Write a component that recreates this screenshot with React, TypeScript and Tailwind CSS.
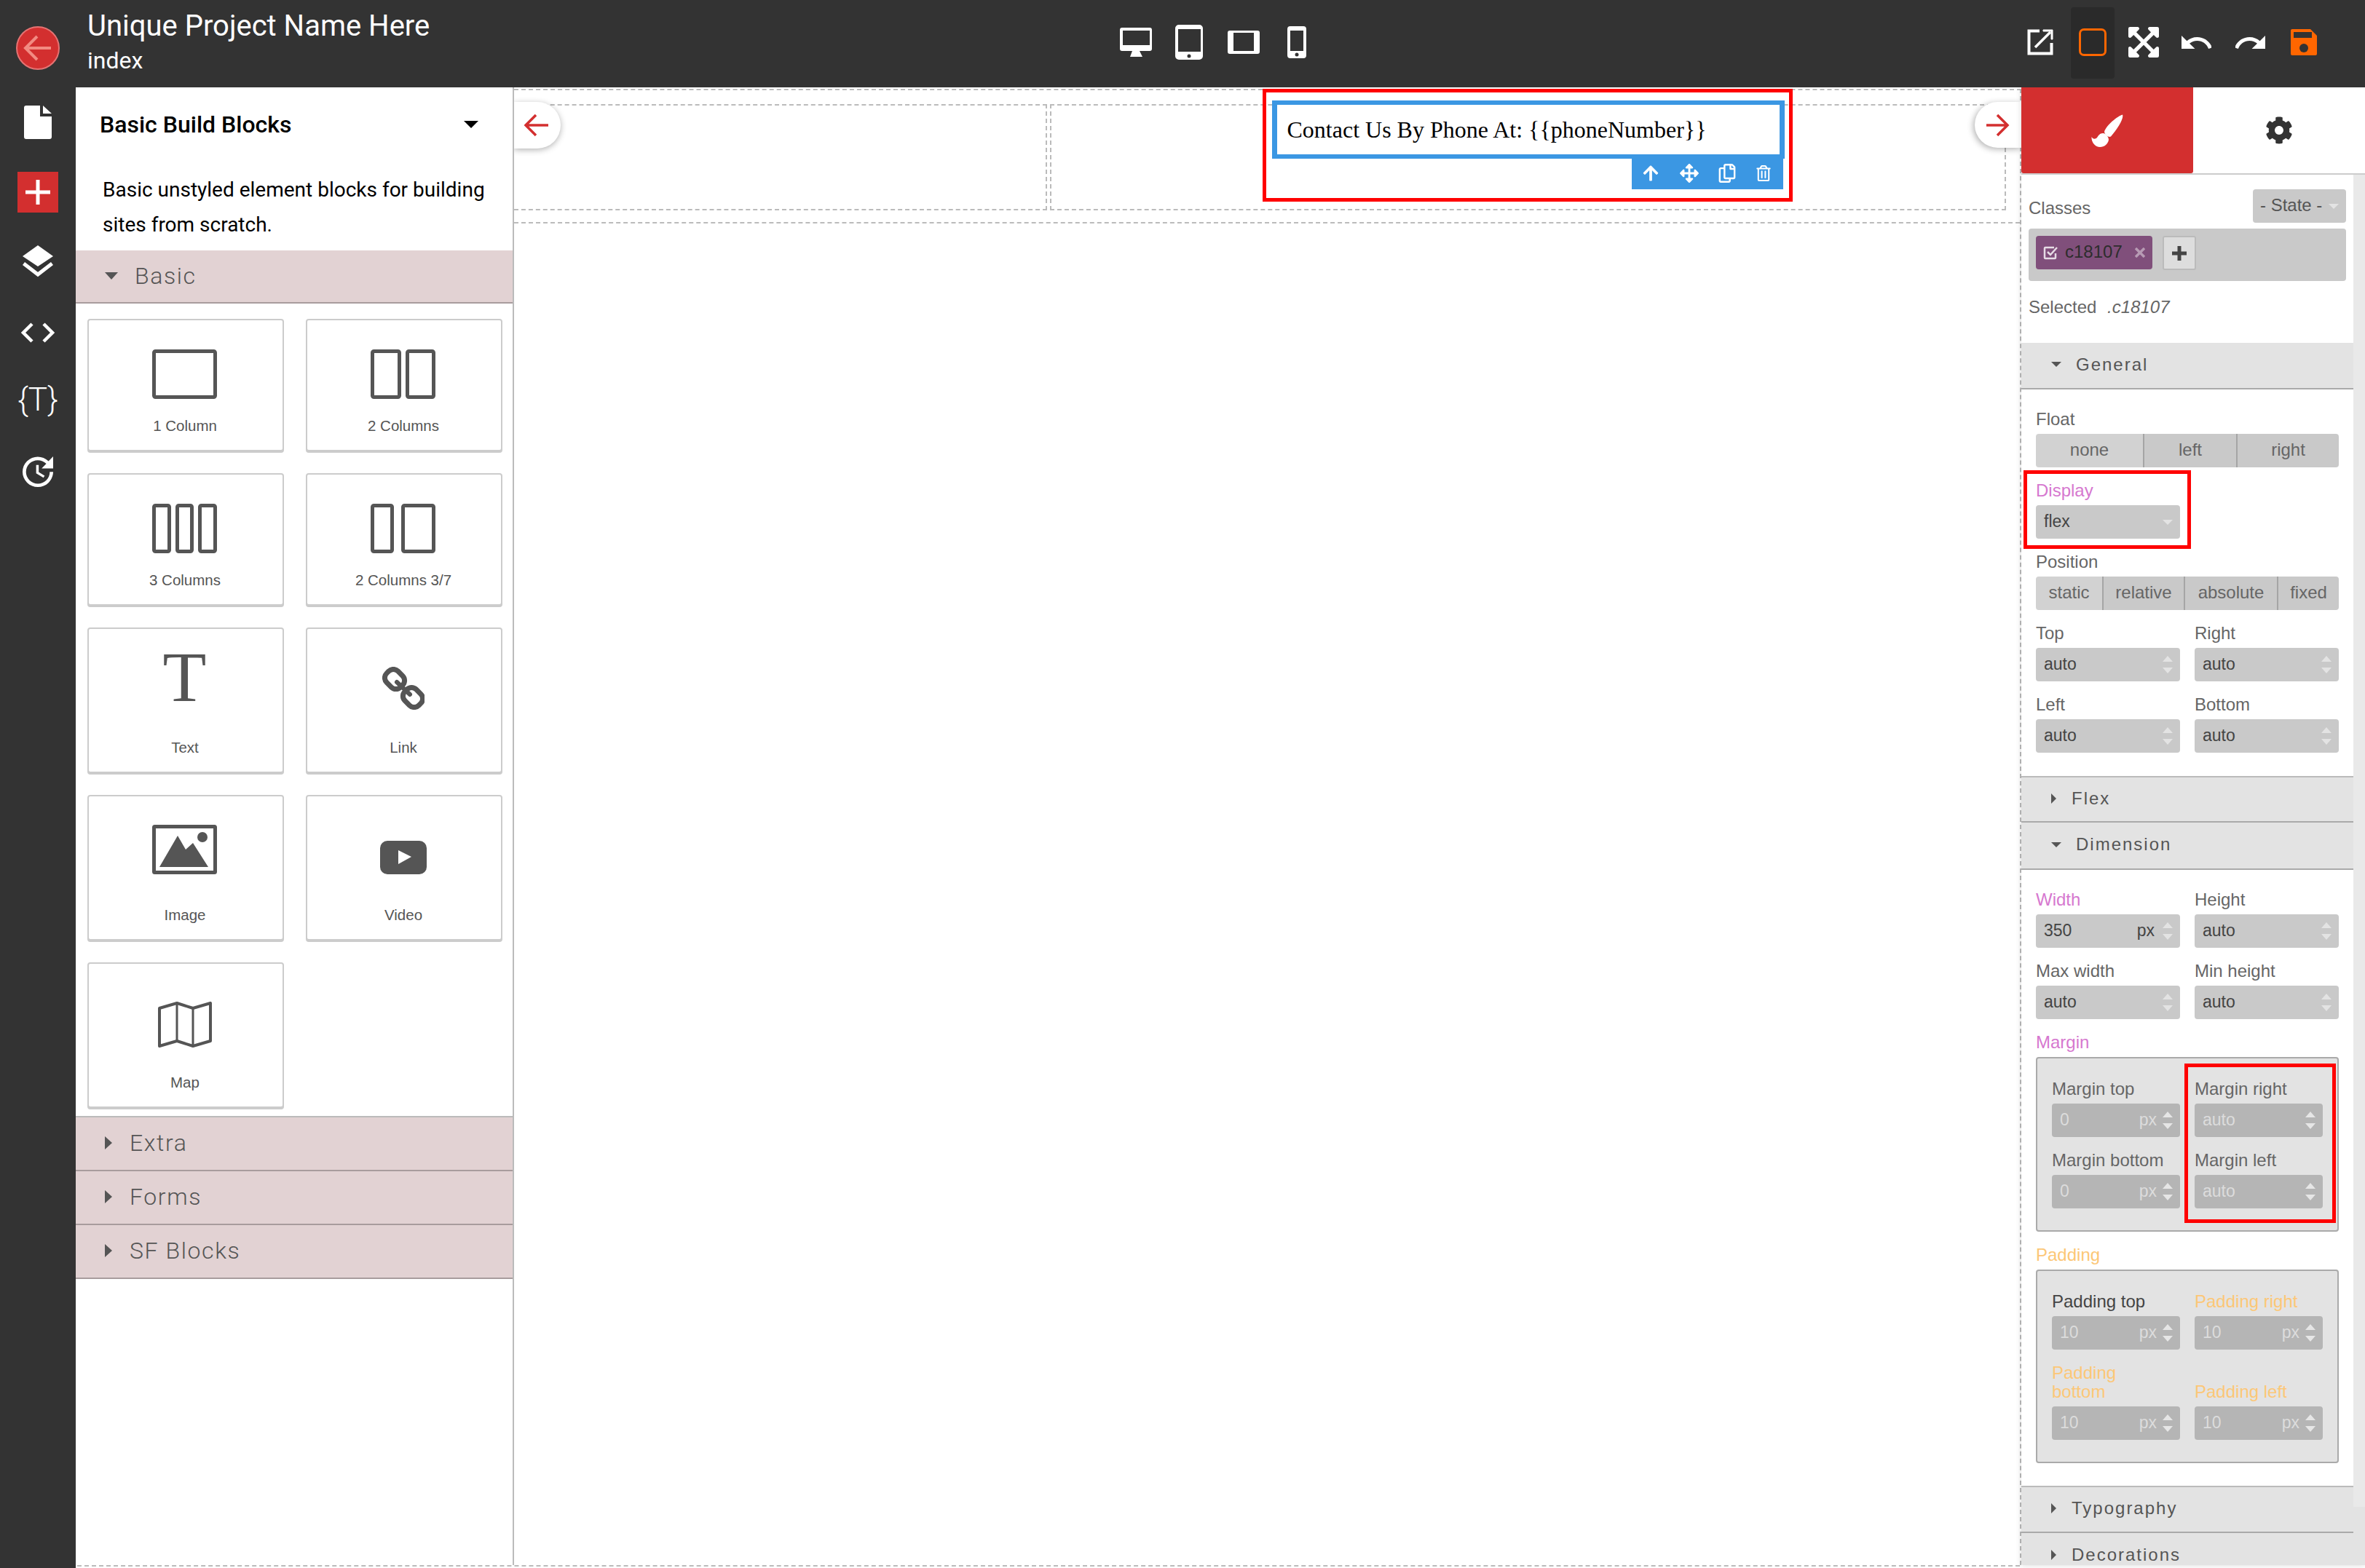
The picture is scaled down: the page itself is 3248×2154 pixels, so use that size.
import React from 'react';
import { FaCog, FaArrowUp, FaArrowsAlt, FaRegCopy, FaRegTrashAlt } from 'react-icons/fa';
import { MdUpdate } from 'react-icons/md';

const TriDown = ({ c = 'border-t-[#555]' }: { c?: string }) => (
  <span className={`block w-0 h-0 border-x-[7px] border-x-transparent border-t-[7px] ${c}`} />
);
const TriRight = ({ c = 'border-l-[#555]' }: { c?: string }) => (
  <span className={`block w-0 h-0 border-y-[7px] border-y-transparent border-l-[7px] ${c}`} />
);

const Stepper = ({ dark }: { dark?: boolean }) => (
  <span className="flex flex-col gap-[8px] items-center">
    <span className={`block w-0 h-0 border-x-[7px] border-x-transparent border-b-[8px] ${dark ? 'border-b-[#e6e6e6]' : 'border-b-[#e3e3e3]'}`} />
    <span className={`block w-0 h-0 border-x-[7px] border-x-transparent border-t-[8px] ${dark ? 'border-t-[#e6e6e6]' : 'border-t-[#e3e3e3]'}`} />
  </span>
);

const Label = ({ children, color = 'text-[#666]' }: { children: React.ReactNode; color?: string }) => (
  <div className={`text-[24px] leading-[26px] mb-[7px] ${color}`}>{children}</div>
);

const Input = ({ value, unit, off, select }: { value: string; unit?: string; off?: boolean; select?: boolean }) => (
  <div className={`h-[46px] rounded-[4px] flex items-center pr-[10px] text-[23px] ${off ? 'bg-[#b5b5b5] text-[#dcdcdc] pl-[11px]' : 'bg-[#c9c9c9] text-[#444] pl-[11px]'}`}>
    <span className="flex-1 pb-[2px]">{value}</span>
    {unit && <span className={`pb-[2px] ${off ? 'mr-[8px]' : 'mr-[11px]'}`}>{unit}</span>}
    {select ? <TriDown c="border-t-[#e3e3e3]" /> : <Stepper dark={off} />}
  </div>
);

const Field = ({ label, value, unit, off, labelColor }: { label: React.ReactNode; value: string; unit?: string; off?: boolean; labelColor?: string }) => (
  <div className="flex flex-col justify-end">
    <Label color={labelColor}>{label}</Label>
    <Input value={value} unit={unit} off={off} />
  </div>
);

const Segments = ({ items }: { items: { t: string; w: string }[] }) => (
  <div className="flex h-[46px] rounded-[4px] overflow-hidden text-[24px] text-[#666]">
    {items.map((it, i) => (
      <div key={it.t} className={`${it.w} flex items-center justify-center pb-[3px] ${i === 0 ? 'bg-[#d2d2d2]' : 'bg-[#c9c9c9] border-l-2 border-l-[#a5a5a5]'}`}>
        {it.t}
      </div>
    ))}
  </div>
);

const SectionHeader = ({ title, open, top, h = 'h-[64px]' }: { title: string; open?: boolean; top?: boolean; h?: string }) => (
  <div className={`${h} shrink-0 bg-[#e3e3e3] border-b-2 border-b-[#aaa] flex items-center pl-[41px] pb-[3px] text-[24px] tracking-[2px] text-[#555] ${top ? 'border-t-2 border-t-[#bbb]' : ''}`}>
    {open ? <TriDown /> : <TriRight />}
    <span className={open ? 'ml-[20px]' : 'ml-[21px]'}>{title}</span>
  </div>
);

const RoseHeader = ({ title, open }: { title: string; open?: boolean }) => (
  <div className={`bg-[#e2d2d3] border-b-2 border-b-[#a89c9d] flex items-center pl-[40px] text-[32px] font-light tracking-[1.6px] text-[#555] ${open ? 'h-[73px] pb-[2px]' : 'h-[74px] pb-[3px]'}`}>
    {open ? <span className="block w-0 h-0 border-x-[9px] border-x-transparent border-t-[10px] border-t-[#555]" /> : <span className="block w-0 h-0 border-y-[9px] border-y-transparent border-l-[10px] border-l-[#555]" />}
    <span className={open ? 'ml-[23px]' : 'ml-[24px]'}>{title}</span>
  </div>
);

const Card = ({ label, tall, top, children }: { label: string; tall?: boolean; top: string; children: React.ReactNode }) => (
  <div className={`w-[270px] ${tall ? 'h-[200px]' : 'h-[182px]'} rounded-[4px] border-2 border-[#ccc] shadow-[0_2px_0_#ccc] flex flex-col items-center bg-white`}>
    <div className={`${tall ? 'h-[150px]' : 'h-[132px]'} pr-[3px] ${top}`}>{children}</div>
    <div className="text-[20.5px] leading-[26px] text-[#555] pr-[2px]">{label}</div>
  </div>
);

const Box = ({ x, w }: { x: number; w: number }) => (
  <rect x={x + 2.5} y={2.5} width={w - 5} height={63} rx={2} fill="none" stroke="#555" strokeWidth={5} />
);

const ColumnIcon = ({ cols }: { cols: [number, number][] }) => (
  <svg width={89} height={68} viewBox="0 0 89 68">
    {cols.map(([x, w]) => <Box key={x} x={x} w={w} />)}
  </svg>
);

const LinkIcon = () => (
  <svg width={58} height={59} viewBox="0 0 58 59" fill="none" stroke="#555">
    <rect x={3.5} y={6} width={27} height={22} rx={9} strokeWidth={7} transform="rotate(45 17 17)" />
    <rect x={28.5} y={31} width={27} height={22} rx={9} strokeWidth={7} transform="rotate(45 42 42)" />
    <path d="M20 21 L38 38" strokeWidth={6} strokeLinecap="round" />
  </svg>
);

const ImageIcon = () => (
  <svg width={89} height={68} viewBox="0 0 89 68">
    <rect x={2.5} y={2.5} width={84} height={63} fill="none" stroke="#555" strokeWidth={5} rx={1} />
    <path d="M10 58 L35 15 L46 34 L56 25 L77 58 Z" fill="#555" />
    <ellipse cx={69} cy={17} rx={7} ry={7} fill="#555" />
  </svg>
);

const VideoIcon = () => (
  <svg width={64} height={46} viewBox="0 0 64 46">
    <rect width={64} height={46} rx={10} fill="#555" />
    <path d="M25 13 L43 22 L25 32 Z" fill="#fff" />
  </svg>
);

const MapIcon = () => (
  <svg width={74} height={63} viewBox="0 0 74 63">
    <path d="M2 9 L26 2 L48 9 L72 2 V54 L48 61 L26 54 L2 61 Z" fill="none" stroke="#555" strokeWidth={4} strokeLinejoin="round" />
    <path d="M26 2 V54 M48 9 V61" stroke="#555" strokeWidth={3} />
  </svg>
);

const Rail = () => (
  <div className="w-[104px] shrink-0 bg-[#333] flex flex-col items-center text-white">
    <div className="mt-[36px] w-[60px] h-[60px] rounded-full bg-[#d32f2f] border-2 border-[#e57373] flex items-center justify-center">
      <svg width={40} height={36} viewBox="0 0 40 36" fill="none" stroke="#f28b82" strokeWidth={4}>
        <path d="M38 18 H3 M19 2 L3 18 L19 34" />
      </svg>
    </div>
    <svg className="mt-[49px]" width={38} height={46} viewBox="0 0 38 46">
      <path d="M3 0 H22 V15 H38 V43 a3 3 0 0 1 -3 3 H3 a3 3 0 0 1 -3 -3 V3 a3 3 0 0 1 3 -3 Z M26 0 L38 11 H26 Z" fill="#fff" />
    </svg>
    <div className="mt-[45px] w-[56px] h-[56px] bg-[#d32f2f] flex items-center justify-center">
      <svg width={34} height={34} viewBox="0 0 34 34"><path d="M14.5 0 h5 v14.5 H34 v5 H19.5 V34 h-5 V19.5 H0 v-5 H14.5 Z" fill="#fff" /></svg>
    </div>
    <svg className="mt-[45px]" width={42} height={44} viewBox="0 0 42 44">
      <path d="M21 0 L42 15 L21 29 L0 15 Z" fill="#fff" />
      <path d="M1.5 25 L21 40 L40.5 25" fill="none" stroke="#fff" strokeWidth={5} />
    </svg>
    <svg className="mt-[62px]" width={46} height={28} viewBox="0 0 46 28" fill="none" stroke="#fff" strokeWidth={4.5}>
      <path d="M15 2 L3 14 L15 26 M31 2 L43 14 L31 26" />
    </svg>
    <div className="mt-[55px] h-[46px] leading-[46px] text-[44px] font-['Roboto',sans-serif] font-light">{'{T}'}</div>
    <MdUpdate className="mt-[48px]" style={{ width: 56, height: 56 }} />
  </div>
);

const Title = () => (
  <div className="w-[1418px] shrink-0 font-['Roboto',sans-serif] text-white">
    <div className="text-[40px] leading-[46px] mt-[1px]">Unique Project Name Here</div>
    <div className="text-[32px] leading-[38px] mt-[5px]">index</div>
  </div>
);

const Devices = () => (
  <div className="flex items-center">
    <svg width={44} height={40} viewBox="0 0 44 40">
      <path fillRule="evenodd" d="M3 0 H41 a3 3 0 0 1 3 3 V29 a3 3 0 0 1 -3 3 H3 a3 3 0 0 1 -3 -3 V3 a3 3 0 0 1 3 -3 Z M4 4 V24 H41 V4 Z" fill="#fff" />
      <path d="M17 32 H27 L31 40 H14 Z" fill="#fff" />
    </svg>
    <svg className="ml-[32px]" width={38} height={48} viewBox="0 0 38 48">
      <path fillRule="evenodd" d="M5 0 H33 a5 5 0 0 1 5 5 V43 a5 5 0 0 1 -5 5 H5 a5 5 0 0 1 -5 -5 V5 a5 5 0 0 1 5 -5 Z M4 6 V37 H35 V6 Z" fill="#fff" />
      <circle cx={19} cy={43} r={2.5} fill="#333" />
    </svg>
    <svg className="ml-[34px]" width={44} height={32} viewBox="0 0 44 32">
      <path fillRule="evenodd" d="M3 0 H41 a3 3 0 0 1 3 3 V29 a3 3 0 0 1 -3 3 H3 a3 3 0 0 1 -3 -3 V3 a3 3 0 0 1 3 -3 Z M8 3 V28 H36 V3 Z" fill="#fff" />
    </svg>
    <svg className="ml-[38px]" width={26} height={44} viewBox="0 0 26 44">
      <path fillRule="evenodd" d="M4 0 H22 a4 4 0 0 1 4 4 V40 a4 4 0 0 1 -4 4 H4 a4 4 0 0 1 -4 -4 V4 a4 4 0 0 1 4 -4 Z M4 6 V34 H22 V6 Z" fill="#fff" />
      <circle cx={13} cy={39} r={2.5} fill="#333" />
    </svg>
  </div>
);

const TopActions = () => (
  <div className="flex items-center pr-[66px] h-[116px] ml-auto">
    <svg width={36} height={36} viewBox="0 0 36 36" fill="none" stroke="#fff">
      <path d="M17 2.5 H2.5 V33.5 H33.5 V19" strokeWidth={4} />
      <path d="M11 25 L32 4" strokeWidth={3.5} />
      <path d="M22 1 H35 V14 H33 V3 H22 Z" fill="#fff" strokeWidth={1} />
    </svg>
    <div className="ml-[24px] w-[60px] h-[98px] bg-[#2a2a2a] rounded-[4px] flex items-center justify-center mt-[2px]">
      <div className="w-[38px] h-[38px] rounded-[7px] border-[3.5px] border-[#f60] -mt-[2px]" />
    </div>
    <svg className="ml-[19px]" width={42} height={42} viewBox="0 32 448 448" fill="#fff">
      <path d="M448 344v112a23.94 23.94 0 0 1-24 24H312c-21.39 0-32.09-25.9-17-41l36.2-36.2L224 295.6 116.77 402.9 153 439c15.09 15.1 4.39 41-17 41H24a23.94 23.94 0 0 1-24-24V344c0-21.4 25.89-32.1 41-17l36.19 36.2L184.46 256 77.18 148.7 41 185c-15.1 15.1-41 4.4-41-17V56a23.94 23.94 0 0 1 24-24h112c21.39 0 32.09 25.9 17 41l-36.2 36.2L224 216.4l107.23-107.3L295 73c-15.09-15.1-4.39-41 17-41h112a23.94 23.94 0 0 1 24 24v112c0 21.4-25.89 32.1-41 17l-36.19-36.2L263.54 256l107.28 107.3L407 327.1c15.1-15.2 41-4.5 41 16.9z" />
    </svg>
    <svg className="ml-[31px]" width={41} height={18} viewBox="2 7 20 9" fill="#fff" preserveAspectRatio="none">
      <path d="M12.5 8c-2.65 0-5.05.99-6.9 2.6L2 7v9h9l-3.62-3.62c1.39-1.16 3.16-1.88 5.12-1.88 3.54 0 6.55 2.31 7.6 5.5l2.37-.78C21.08 11.03 17.15 8 12.5 8z" />
    </svg>
    <svg className="ml-[33px] -scale-x-100" width={41} height={18} viewBox="2 7 20 9" fill="#fff" preserveAspectRatio="none">
      <path d="M12.5 8c-2.65 0-5.05.99-6.9 2.6L2 7v9h9l-3.62-3.62c1.39-1.16 3.16-1.88 5.12-1.88 3.54 0 6.55 2.31 7.6 5.5l2.37-.78C21.08 11.03 17.15 8 12.5 8z" />
    </svg>
    <svg className="ml-[35px]" width={36} height={36} viewBox="0 0 36 36">
      <path d="M2 0 H27 L36 9 V34 a2 2 0 0 1 -2 2 H2 a2 2 0 0 1 -2 -2 V2 a2 2 0 0 1 2 -2 Z" fill="#f60" />
      <rect x={4} y={4} width={25} height={8} fill="#333" />
      <circle cx={18} cy={26} r={6} fill="#333" />
    </svg>
  </div>
);

const LeftPanel = () => (
  <div className="w-[602px] shrink-0 bg-white border-r-2 border-r-[#bbb] font-['Roboto',sans-serif] z-10">
    <div className="h-[102px] flex items-center pl-[33px] pr-[47px]">
      <span className="text-[32px] font-medium text-black flex-1 -mt-[1px]">Basic Build Blocks</span>
      <span className="block w-0 h-0 border-x-[10px] border-x-transparent border-t-[10px] border-t-black" />
    </div>
    <div className="pl-[37px] pr-[30px] text-[28px] leading-[48px] text-black h-[122px] pt-[15px]">
      Basic unstyled element blocks for building sites from scratch.
    </div>
    <RoseHeader title="Basic" open />
    <div className="pl-[16px] pt-[21px] grid grid-cols-[270px_270px] gap-x-[30px] gap-y-[30px] font-['Liberation_Sans',sans-serif] h-[1116px] content-start">
      <Card label="1 Column" top="pt-[40px]"><ColumnIcon cols={[[0, 89]]} /></Card>
      <Card label="2 Columns" top="pt-[40px]"><ColumnIcon cols={[[0, 42], [48, 41]]} /></Card>
      <Card label="3 Columns" top="pt-[40px]"><ColumnIcon cols={[[0, 26], [32, 25], [63, 26]]} /></Card>
      <Card label="2 Columns 3/7" top="pt-[40px]"><ColumnIcon cols={[[0, 32], [42, 47]]} /></Card>
      <Card label="Text" tall top="pt-[6px]">
        <div className="font-['Liberation_Serif',serif] text-[98px] leading-[120px] text-[#555]">T</div>
      </Card>
      <Card label="Link" tall top="pt-[52px]"><LinkIcon /></Card>
      <Card label="Image" tall top="pt-[39px]"><ImageIcon /></Card>
      <Card label="Video" tall top="pt-[61px]"><VideoIcon /></Card>
      <Card label="Map" tall top="pt-[52px]"><MapIcon /></Card>
    </div>
    <div className="border-t-2 border-t-[#bbb]" />
    <RoseHeader title="Extra" />
    <RoseHeader title="Forms" />
    <RoseHeader title="SF Blocks" />
  </div>
);

const dashed = 'border-dashed border-[#bbb]';

const Canvas = () => (
  <div className="relative flex-1 min-w-0 bg-white font-['Liberation_Serif',serif]">
    <div className={`h-[2028px] mt-[2px] border-t-2 border-r-2 ${dashed}`}>
      <div className={`h-[183px] pt-[19px] border-b-2 ${dashed}`}>
        <div className="flex gap-[4px] h-[146px]">
          <div className={`w-[732px] shrink-0 border-y-2 border-r-2 ${dashed}`} />
          <div className={`w-[1313px] shrink-0 border-2 ${dashed} flex justify-center items-start`}>
            <div className="relative w-[704px] h-[80px] -mt-[7px] border-x-[7px] border-y-[6px] border-[#3b97e3] bg-white flex items-center pl-[14px] text-[32px] text-black">
              Contact Us By Phone At: {'{{phoneNumber}}'}
              <div className="absolute right-[-5px] top-[74px] w-[208px] h-[42px] bg-[#3b97e3] flex items-center text-white pb-[2px]">
                <FaArrowUp className="ml-[14px]" style={{ width: 24, height: 24 }} />
                <FaArrowsAlt className="ml-[28px]" style={{ width: 26, height: 26 }} />
                <FaRegCopy className="ml-[26px]" style={{ width: 26, height: 26 }} />
                <FaRegTrashAlt className="ml-[26px]" style={{ width: 22, height: 22 }} />
              </div>
              <div className="absolute left-[-20px] top-[-22px] w-[728px] h-[155px] border-[5px] border-[#f00] pointer-events-none" />
            </div>
          </div>
        </div>
      </div>
    </div>
    <div className="absolute left-0 top-[20px] w-[64px] h-[64px] rounded-r-full bg-white shadow-[0_2px_8px_rgba(0,0,0,0.3)] flex items-center pl-[13px]">
      <svg width={34} height={32} viewBox="0 0 34 32" fill="none" stroke="#d32f2f" strokeWidth={3.5}>
        <path d="M34 16 H3 M17 2 L3 16 L17 30" />
      </svg>
    </div>
    <div className="absolute right-0 top-[20px] w-[64px] h-[63px] rounded-l-full bg-white shadow-[-2px_2px_8px_rgba(0,0,0,0.3)] flex items-center pl-[16px]">
      <svg width={32} height={32} viewBox="0 0 32 32" fill="none" stroke="#d32f2f" strokeWidth={3.5}>
        <path d="M0 16 H29 M15 2 L29 16 L15 30" />
      </svg>
    </div>
  </div>
);

const Brush = () => (
  <svg width={44} height={45} viewBox="0 0 44 45" fill="#fff">
    <path d="M43 0.5 C45 6 36 20 27 30.5 C24 32 19 29 18 24 C19 18 33 4 43 0.5 Z" />
    <path d="M16 26 C20 26 24 31 24 35 C23 41 18 45 12 45 C6 45 0 39 0.5 31 C3 35 6 34 8 32 C10 29 12 26 16 26 Z" />
  </svg>
);

const RightPanel = () => (
  <div className="w-[472px] shrink-0 bg-[#e3e3e3] flex flex-col overflow-hidden shadow-[0_0_8px_rgba(0,0,0,0.15)] z-10 text-[#555] rounded-bl-[3px]">
    <div className="flex h-[120px] shrink-0 bg-white border-b-2 border-b-[#ccc]">
      <div className="w-[236px] h-[118px] bg-[#d32f2f] rounded-b-[3px] flex items-center justify-center"><Brush /></div>
      <div className="flex-1 flex items-center justify-center text-[#333]">
        <FaCog style={{ width: 38, height: 38 }} />
      </div>
    </div>
    <div className="flex flex-1 min-h-0">
      <div className="w-[456px] shrink-0">
        <div className="bg-white h-[231px] pt-[20px] px-[10px]">
          <div className="flex items-start justify-between">
            <span className="text-[24px] leading-[26px] mt-[13px] text-[#666]">Classes</span>
            <div className="w-[128px] h-[46px] bg-[#c9c9c9] rounded-[4px] flex items-center pl-[10px] text-[24px] text-[#555]">
              <span className="flex-1 pb-[3px]">- State -</span>
              <span className="mr-[10px]"><TriDown c="border-t-[#e3e3e3]" /></span>
            </div>
          </div>
          <div className="mt-[8px] h-[72px] bg-[#c9c9c9] rounded-[4px] flex items-start pl-[10px] pt-[10px]">
            <div className="w-[160px] h-[46px] rounded-[4px] bg-[#804f7b] flex items-center pl-[10px] text-[24px] text-[#2d2d2d]">
              <svg width={20} height={20} viewBox="0 0 20 20" fill="none" stroke="#e6dce5" strokeWidth={2.5}>
                <path d="M15 3 H3 a1 1 0 0 0 -1 1 V17 a1 1 0 0 0 1 1 H16 a1 1 0 0 0 1 -1 V11" />
                <path d="M6 9 L10 13 L19 3" />
              </svg>
              <span className="ml-[10px] pb-[2px]">c18107</span>
              <svg className="ml-[17px]" width={14} height={14} viewBox="0 0 14 14" stroke="#b79bb4" strokeWidth={3.5}>
                <path d="M1 1 L13 13 M13 1 L1 13" />
              </svg>
            </div>
            <div className="ml-[14px] w-[46px] h-[47px] bg-[#ddd] border-2 border-[#bbb] rounded-[3px] flex items-center justify-center">
              <svg width={20} height={20} viewBox="0 0 20 20"><path d="M7.5 0 h5 v7.5 H20 v5 H12.5 V20 h-5 V12.5 H0 v-5 H7.5 Z" fill="#444" /></svg>
            </div>
          </div>
          <div className="mt-[23px] text-[24px] leading-[26px] text-[#666]">
            Selected <span className="italic ml-[8px]">.c18107</span>
          </div>
        </div>
        <SectionHeader title="General" open />
        <div className="bg-white px-[20px] pt-[28px] pb-[32px]">
          <Label>Float</Label>
          <Segments items={[{ t: 'none', w: 'w-[147px]' }, { t: 'left', w: 'w-[128px]' }, { t: 'right', w: 'flex-1' }]} />
          <div className="relative w-[198px] mt-[19px]">
            <Label color="text-[#d678cf]">Display</Label>
            <Input value="flex" select />
            <div className="absolute left-[-17px] top-[-15px] w-[230px] h-[108px] border-[5px] border-[#f00]" />
          </div>
          <div className="mt-[19px]">
            <Label>Position</Label>
            <Segments items={[{ t: 'static', w: 'w-[91px]' }, { t: 'relative', w: 'w-[112px]' }, { t: 'absolute', w: 'w-[128px]' }, { t: 'fixed', w: 'flex-1' }]} />
          </div>
          <div className="grid grid-cols-2 gap-x-[20px] gap-y-[19px] mt-[19px]">
            <Field label="Top" value="auto" />
            <Field label="Right" value="auto" />
            <Field label="Left" value="auto" />
            <Field label="Bottom" value="auto" />
          </div>
        </div>
        <SectionHeader title="Flex" top />
        <SectionHeader title="Dimension" open h="h-[65px]" />
        <div className="bg-white px-[20px] pt-[28px] pb-[31px]">
          <div className="grid grid-cols-2 gap-x-[20px] gap-y-[19px]">
            <Field label="Width" labelColor="text-[#d678cf]" value="350" unit="px" />
            <Field label="Height" value="auto" />
            <Field label="Max width" value="auto" />
            <Field label="Min height" value="auto" />
          </div>
          <div className="mt-[19px]"><Label color="text-[#d678cf]">Margin</Label></div>
          <div className="relative bg-[#e3e3e3] border-2 border-[#aaa] rounded-[4px] px-[20px] pt-[29px] pb-[30px] grid grid-cols-2 gap-x-[20px] gap-y-[19px]">
            <Field label="Margin top" value="0" unit="px" off />
            <Field label="Margin right" value="auto" off />
            <Field label="Margin bottom" value="0" unit="px" off />
            <Field label="Margin left" value="auto" off />
            <div className="absolute left-[202px] top-[7px] w-[208px] h-[219px] border-[5px] border-[#f00]" />
          </div>
          <div className="mt-[19px]"><Label color="text-[#fcc777]">Padding</Label></div>
          <div className="bg-[#e3e3e3] border-2 border-[#aaa] rounded-[4px] px-[20px] pt-[29px] pb-[30px] grid grid-cols-2 gap-x-[20px] gap-y-[19px]">
            <Field label="Padding top" labelColor="text-[#444]" value="10" unit="px" off />
            <Field label="Padding right" labelColor="text-[#fcc777]" value="10" unit="px" off />
            <Field label={<>Padding<br />bottom</>} labelColor="text-[#fcc777]" value="10" unit="px" off />
            <Field label="Padding left" labelColor="text-[#fcc777]" value="10" unit="px" off />
          </div>
        </div>
        <SectionHeader title="Typography" top h="h-[65px]" />
        <SectionHeader title="Decorations" />
      </div>
      <div className="w-[16px] h-[1830px] bg-[#e9e9e9] shrink-0" />
    </div>
  </div>
);

export default function App() {
  return (
    <div className="w-[3248px] h-[2154px] overflow-hidden flex bg-white font-['Liberation_Sans',sans-serif]">
      <Rail />
      <div className="flex-1 min-w-0 flex flex-col">
        <div className="h-[120px] shrink-0 bg-[#333] flex pl-[16px] items-start relative z-20">
          <div className="pt-[12px]"><Title /></div>
          <div className="h-[116px] flex items-center"><Devices /></div>
          <TopActions />
        </div>
        <div className="flex h-[2030px] shrink-0">
          <LeftPanel />
          <Canvas />
          <RightPanel />
        </div>
        <div className={`ml-[2px] mr-[474px] h-[4px] border-t-2 ${dashed}`} />
      </div>
    </div>
  );
}
